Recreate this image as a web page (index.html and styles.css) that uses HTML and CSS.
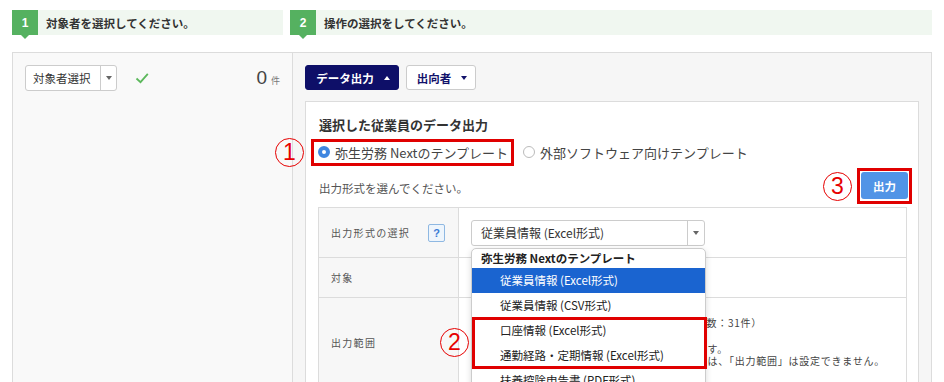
FILE: index.html
```html
<!DOCTYPE html>
<html lang="ja">
<head>
    <meta charset="UTF-8">
    <title>データ出力</title>
    <link rel="stylesheet" href="styles.css">
</head>
<body>
<div class="page">
    <div class="steps">
        <div class="step step-first">
            <span class="badge">1</span>
            <span class="step-text">対象者を選択してください。</span>
        </div>
        <div class="step step-second">
            <span class="badge">2</span>
            <span class="step-text">操作の選択をしてください。</span>
        </div>
    </div>

    <div class="main">
        <div class="left">
            <div class="target-row">
                <div class="pick">
                    <span class="pick-label">対象者選択</span>
                    <span class="pick-caret"><i class="caret-down gray"></i></span>
                </div>
                <svg class="check" width="14" height="12" viewBox="0 0 14 12">
                    <path d="M1.5 6.5 L5.5 10.2 L12.8 1.8" fill="none" stroke="#5cb85c" stroke-width="1.8"/>
                </svg>
                <div class="count"><span class="count-num">0</span><span class="count-unit">件</span></div>
            </div>
        </div>

        <div class="right">
            <div class="toolbar">
                <button class="btn btn-navy">データ出力 <i class="caret-up"></i></button>
                <button class="btn btn-plain">出向者 <i class="caret-down navy"></i></button>
            </div>

            <div class="panel">
                <h2 class="panel-title">選択した従業員のデータ出力</h2>
                <div class="radio-row">
                    <label class="radio"><span class="dot on"></span>弥生労務 Nextのテンプレート</label>
                    <label class="radio"><span class="dot"></span>外部ソフトウェア向けテンプレート</label>
                </div>
                <div class="format-row">
                    <p class="hint">出力形式を選んでください。</p>
                    <button class="btn-output">出力</button>
                </div>

                <div class="form-table">
                    <div class="cell label row-a">出力形式の選択<span class="help">?</span></div>
                    <div class="cell value row-a">
                        <div class="select-wrap">
                            <div class="select">
                                <span class="select-text">従業員情報 (Excel形式)</span>
                                <span class="select-caret"><i class="caret-down gray"></i></span>
                            </div>
                            <div class="dropdown">
                                <div class="dd-group">弥生労務 Nextのテンプレート</div>
                                <div class="dd-item active">従業員情報 (Excel形式)</div>
                                <div class="dd-item">従業員情報 (CSV形式)</div>
                                <div class="dd-item">口座情報 (Excel形式)</div>
                                <div class="dd-item">通勤経路・定期情報 (Excel形式)</div>
                                <div class="dd-item">扶養控除申告書 (PDF形式)</div>
                            </div>
                        </div>
                    </div>

                    <div class="cell label row-b">対象</div>
                    <div class="cell value row-b"></div>

                    <div class="cell label row-c">出力範囲</div>
                    <div class="cell value row-c range">
                        <p class="range-line">現在のすべての従業員を出力します（対象従業員数：31件）</p>
                        <p class="range-note">※選択した従業員の登録情報をまとめて出力します。</p>
                        <p class="range-note">※口座情報・通勤経路・定期情報を選択した場合は、「出力範囲」は設定できません。</p>
                    </div>
                </div>
            </div>
        </div>
    </div>

    <!-- annotations -->
    <span class="mark mark-1">1</span>
    <span class="mark mark-2">2</span>
    <span class="mark mark-3">3</span>
    <span class="red-box box-1"></span>
    <span class="red-box box-2"></span>
    <span class="red-box box-3"></span>
</div>
</body>
</html>
```

FILE: styles.css
```css
body {
    margin: 0;
    font-family: "Noto Sans CJK JP", "Noto Sans", sans-serif;
    color: #333;
    background: #fff;
    overflow: hidden;
}
.page {
    position: relative;
    padding: 10px 12px 0 12px;
    width: 920px;
    height: 372px;
    overflow: hidden;
}

/* steps */
.steps {
    display: flex;
    gap: 7px;
    height: 25px;
    margin-bottom: 17px;
}
.step {
    display: flex;
    align-items: center;
    background: #f0f7f0;
    height: 25px;
}
.step-first { width: 271px; }
.step-second { flex: 1; }
.badge {
    position: relative;
    width: 26px;
    height: 25px;
    background: #55b160;
    color: #fff;
    font-family: "Liberation Sans", sans-serif;
    font-weight: bold;
    font-size: 12px;
    display: flex;
    align-items: center;
    justify-content: center;
}
.badge::after {
    content: "";
    position: absolute;
    left: 9px;
    bottom: -4px;
    border-left: 4px solid transparent;
    border-right: 4px solid transparent;
    border-top: 4px solid #55b160;
}
.step-text {
    font-size: 11.5px;
    font-weight: bold;
    color: #333;
    margin-left: 8px;
}

/* main frame */
.main {
    display: grid;
    grid-template-columns: 280px 1fr;
    border: 1px solid #dcdcdc;
    height: 400px;
}
.left {
    background: #f9f9f9;
    border-right: 1px solid #dcdcdc;
    padding: 12px 12px 0 12px;
}
.target-row {
    display: flex;
    align-items: center;
    height: 26px;
}
.pick {
    display: flex;
    height: 24px;
    width: 90px;
    border: 1px solid #ccc;
    border-radius: 3px;
    background: #fff;
}
.pick-label {
    font-size: 11.5px;
    padding: 0 0 0 7px;
    width: 67px;
    line-height: 24px;
}
.pick-caret {
    flex: 1;
    border-left: 1px solid #ccc;
    display: flex;
    align-items: center;
    justify-content: center;
}
.check { margin-left: 18px; }
.count {
    margin-left: auto;
    display: flex;
    align-items: baseline;
}
.count-num {
    font-family: "Liberation Sans", sans-serif;
    font-size: 19px;
    color: #444;
}
.count-unit {
    font-size: 9px;
    color: #777;
    margin-left: 4px;
}

.caret-down, .caret-up {
    display: inline-block;
    width: 0;
    height: 0;
    border-left: 3.5px solid transparent;
    border-right: 3.5px solid transparent;
}
.caret-down { border-top: 4px solid #666; }
.caret-down.navy { border-top-color: #12126b; }
.caret-up { border-bottom: 4px solid #fff; }

/* right */
.right {
    background: #f6f6f6;
    padding: 12px 12px 0 12px;
}
.toolbar {
    display: flex;
    gap: 7px;
    height: 25px;
}
.btn {
    font-family: inherit;
    font-size: 11.5px;
    font-weight: bold;
    border-radius: 3px;
    height: 25px;
    padding: 0 0 0 2px;
    display: flex;
    align-items: center;
    justify-content: center;
    gap: 10px;
    white-space: nowrap;
}
.btn-navy {
    background: #0e0f68;
    color: #fff;
    border: 1px solid #0e0f68;
    width: 94px;
}
.btn-plain {
    background: #fff;
    color: #12126b;
    border: 1px solid #ccc;
    width: 70px;
}

.panel {
    margin-top: 11px;
    background: #fff;
    border: 1px solid #dcdcdc;
    border-bottom: none;
    padding: 13px 11px 0 12px;
    height: 300px;
}
.panel-title {
    margin: 0 0 0 1px;
    font-size: 13px;
    font-weight: bold;
    line-height: 20px;
    color: #333;
}
.radio-row {
    display: flex;
    gap: 15px;
    margin-top: 8px;
    height: 18px;
    align-items: center;
}
.radio {
    display: flex;
    align-items: center;
    font-size: 13px;
    color: #444;
}
.dot {
    width: 10px;
    height: 10px;
    border: 1px solid #bbb;
    border-radius: 50%;
    margin-right: 5px;
    box-sizing: content-box;
}
.dot.on {
    width: 4px;
    height: 4px;
    border: 4px solid #3f86e0;
}
.format-row {
    display: flex;
    align-items: center;
    justify-content: space-between;
    margin-top: 11px;
    height: 27px;
}
.hint {
    margin: 0 0 0 1px;
    font-size: 11.5px;
    color: #555;
    position: relative;
    top: 2px;
}
.btn-output {
    width: 47px;
    height: 27px;
    border: none;
    border-radius: 3px;
    background: #5194e6;
    color: #fff;
    font-family: inherit;
    font-size: 11.5px;
    font-weight: bold;
    margin-right: -1px;
}

/* form table */
.form-table {
    display: grid;
    grid-template-columns: 140px 1fr;
    margin-top: 8px;
    border: 1px solid #dcdcdc;
    border-bottom: none;
}
.cell {
    display: flex;
    align-items: center;
    border-bottom: 1px solid #dcdcdc;
}
.label {
    background: #f7f7f7;
    border-right: 1px solid #dcdcdc;
    font-size: 10px;
    letter-spacing: 1.3px;
    color: #555;
    padding: 0 13px 0 12px;
}
.row-a { height: 49px; }
.row-b { height: 39px; }
.row-c { height: 88px; }
.value { padding-left: 12px; }
.help {
    margin-left: auto;
    width: 15px;
    height: 16px;
    border: 1px solid #8fb8e2;
    border-radius: 2px;
    background: #eef5fc;
    color: #3a7bd5;
    font-family: "Liberation Sans", sans-serif;
    font-weight: bold;
    font-size: 11px;
    letter-spacing: 0;
    display: flex;
    align-items: center;
    justify-content: center;
}
.select-wrap {
    position: relative;
    width: 234px;
}
.select {
    display: flex;
    height: 24px;
    border: 1px solid #ccc;
    border-radius: 3px;
    background: #fff;
}
.select-text {
    flex: 1;
    font-size: 12px;
    line-height: 24px;
    padding-left: 9px;
    color: #333;
}
.select-caret {
    width: 16px;
    border-left: 1px solid #ccc;
    display: flex;
    align-items: center;
    justify-content: center;
}
.dropdown {
    position: absolute;
    top: 28px;
    left: 0;
    width: 233px;
    background: #fff;
    border: 1px solid #ccc;
    border-radius: 5px 5px 0 0;
    box-shadow: 0 2px 6px rgba(0, 0, 0, 0.15);
    z-index: 2;
}
.dd-group {
    height: 19px;
    line-height: 19px;
    font-size: 11.5px;
    font-weight: bold;
    color: #222;
    padding-left: 9px;
}
.dd-item {
    height: 25px;
    line-height: 25px;
    font-size: 11.5px;
    color: #222;
    padding-left: 28px;
}
.dd-item.active {
    background: #1a64d0;
    color: #fff;
}
.range {
    flex-direction: column;
    align-items: flex-start;
    justify-content: flex-start;
    padding-top: 18px;
    font-size: 10px;
    letter-spacing: 0.75px;
    color: #444;
}
.range p { margin: 0; white-space: nowrap; }
.range-line { line-height: 14px; margin-bottom: 13px !important; }
.range-note { line-height: 12px; }

/* annotations */
.mark {
    position: absolute;
    width: 27px;
    height: 27px;
    border: 1px solid #e60000;
    border-radius: 50%;
    color: #e60000;
    font-family: "Liberation Sans", sans-serif;
    font-size: 23px;
    line-height: 27px;
    text-align: center;
    z-index: 5;
}
.mark-1 { left: 275px; top: 138px; }
.mark-2 { left: 440px; top: 328px; }
.mark-3 { left: 823px; top: 172px; }
.red-box {
    position: absolute;
    border: 3px solid #e00000;
    z-index: 5;
}
.box-1 { left: 311px; top: 139px; width: 197px; height: 21px; }
.box-2 { left: 472px; top: 317px; width: 229px; height: 46px; }
.box-3 { left: 857px; top: 168px; width: 49px; height: 30px; }
```
